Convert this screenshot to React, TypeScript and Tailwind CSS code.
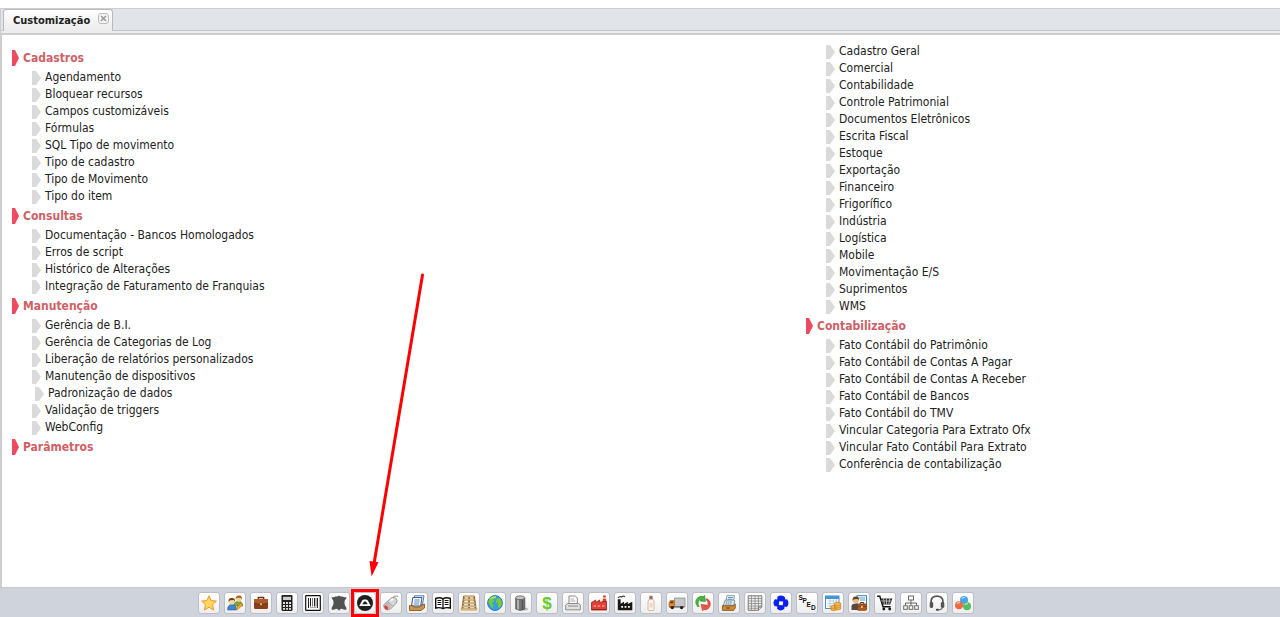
import type { ReactNode } from "react";

type Item = { label: string; nested?: boolean };
type Section = { title?: string; items: Item[] };

const list = (...labels: string[]): Item[] => labels.map((label) => ({ label }));

const leftSections: Section[] = [
  {
    title: "Cadastros",
    items: list(
      "Agendamento",
      "Bloquear recursos",
      "Campos customizáveis",
      "Fórmulas",
      "SQL Tipo de movimento",
      "Tipo de cadastro",
      "Tipo de Movimento",
      "Tipo do item",
    ),
  },
  {
    title: "Consultas",
    items: list(
      "Documentação - Bancos Homologados",
      "Erros de script",
      "Histórico de Alterações",
      "Integração de Faturamento de Franquias",
    ),
  },
  {
    title: "Manutenção",
    items: [
      ...list(
        "Gerência de B.I.",
        "Gerência de Categorias de Log",
        "Liberação de relatórios personalizados",
        "Manutenção de dispositivos",
      ),
      { label: "Padronização de dados", nested: true },
      ...list("Validação de triggers", "WebConfig"),
    ],
  },
  { title: "Parâmetros", items: [] },
];

const rightSections: Section[] = [
  {
    items: list(
      "Cadastro Geral",
      "Comercial",
      "Contabilidade",
      "Controle Patrimonial",
      "Documentos Eletrônicos",
      "Escrita Fiscal",
      "Estoque",
      "Exportação",
      "Financeiro",
      "Frigorífico",
      "Indústria",
      "Logística",
      "Mobile",
      "Movimentação E/S",
      "Suprimentos",
      "WMS",
    ),
  },
  {
    title: "Contabilização",
    items: list(
      "Fato Contábil do Patrimônio",
      "Fato Contábil de Contas A Pagar",
      "Fato Contábil de Contas A Receber",
      "Fato Contábil de Bancos",
      "Fato Contábil do TMV",
      "Vincular Categoria Para Extrato Ofx",
      "Vincular Fato Contábil Para Extrato",
      "Conferência de contabilização",
    ),
  },
];

function MenuSection({ section }: { section: Section }) {
  return (
    <section>
      {section.title && (
        <h2 className="my-0.5 flex h-[18px] items-center gap-1 text-xs leading-[18px] font-bold text-[#cf5f66]">
          <svg viewBox="0 0 7 16" className="h-4 w-[7px] shrink-0" aria-hidden="true">
            <path d="M0 0H3L7 8L3 16H0Z" fill="#ef4a60" />
          </svg>
          {section.title}
        </h2>
      )}
      <ul className="pl-5">
        {section.items.map((item) => (
          <li key={item.label} className={item.nested ? "flex pl-[3px]" : "flex"}>
            <a href="#" className="flex h-[17px] items-center gap-1 text-xs leading-[17px] text-[#222]">
              <svg viewBox="0 0 9 14" className="h-3.5 w-[9px] shrink-0" aria-hidden="true">
                <path d="M0 0H4L9 7L4 14H0Z" fill="#dadada" />
              </svg>
              {item.label}
            </a>
          </li>
        ))}
      </ul>
    </section>
  );
}

const modules: { name: string; art: ReactNode; marked?: boolean }[] = [
  {
    name: "Favoritos",
    art: (
      <path d="M8 .8L10.1 5.6L15.4 6.1L11.5 9.7L12.6 15L8 12.3L3.4 15L4.5 9.7L.6 6.1L5.9 5.6Z" fill="#ffd75e" stroke="#e59a2c" strokeLinejoin="round" />
    ),
  },
  {
    name: "Usuários",
    art: (
      <>
        <path d="M7 9Q8 6 11.5 6.5Q15 6 15.5 10V11H8Z" fill="#7aa83a" stroke="#557a22" strokeWidth=".6" />
        <circle cx="11.8" cy="3.8" r="2.9" fill="#f6cf9a" />
        <path d="M8.6 4Q8.5 .4 12 .5Q15.2.6 15 4.6L13.8 3L10 2.8Z" fill="#a8651c" />
        <path d="M.6 15Q.5 9.5 5 9.5Q9.3 9.5 9.3 15Z" fill="#3c84cf" stroke="#235b9b" strokeWidth=".6" />
        <circle cx="4.8" cy="6.5" r="3" fill="#f8d5a8" />
        <path d="M1.6 7Q1 2.8 5 3Q8.5 3 8 7L7 5L3 5.2Z" fill="#6b4113" />
        <path d="M9 15L10 12L14 8L15.5 9.7L11.6 13.8Z" fill="#f6a52c" stroke="#b66812" strokeWidth=".6" />
      </>
    ),
  },
  {
    name: "Maleta",
    art: (
      <>
        <path d="M5.3 4V2.5H10.7V4" fill="none" stroke="#6b3012" strokeWidth="1.3" />
        <rect x="1" y="4" width="14" height="10" rx="1.2" fill="#8a4118" />
        <path d="M1 5Q1 4 2 4H14Q15 4 15 5V8Q8 10.5 1 8Z" fill="#ac5a28" />
        <path d="M1 8.3Q8 11 15 8.3" fill="none" stroke="#6b3012" strokeWidth=".8" />
        <rect x="7.2" y="8.4" width="1.6" height="1.8" fill="#f1cf94" />
      </>
    ),
  },
  {
    name: "Calculadora",
    art: (
      <>
        <rect x="2.5" width="11" height="16" rx="1.3" fill="#222" />
        <rect x="4" y="1.8" width="8" height="3.2" fill="#ccc" />
        <path d="M4 7H6V9H4ZM7 7H9V9H7ZM10 7H12V9H10ZM4 10H6V12H4ZM7 10H9V12H7ZM10 10H12V12H10ZM4 13H6V14.7H4ZM7 13H9V14.7H7ZM10 13H12V14.7H10Z" fill="#ddd" />
      </>
    ),
  },
  {
    name: "Código de barras",
    art: (
      <>
        <rect x=".7" y=".7" width="14.6" height="14.6" rx=".6" fill="#fff" stroke="#111" strokeWidth="1.2" />
        <path d="M3.5 3V13M5.5 3V11.5M9.5 3V11.5M12.5 3V13" stroke="#222" />
        <path d="M7.5 3V11.5M11 3V11.5" stroke="#777" />
        <path d="M5 12.6H11.5" stroke="#888" strokeWidth=".8" />
      </>
    ),
  },
  {
    name: "Couro",
    art: (
      <path d="M.6 2Q3 2.7 5 1.2Q6.3 2 8 .5Q9.7 2 11 1.2Q13 2.7 15.4 2Q15.5 4 13.8 5.3Q13 8 14 10.4Q15.8 12.4 15.2 14.7Q13 15.3 11 13.7Q9 13.6 8 15.7Q7 13.6 5 13.7Q3 15.3.8 14.7Q.2 12.4 2 10.4Q3 8 2.2 5.3Q.5 4 .6 2Z" fill="#505350" />
    ),
  },
  {
    name: "Customização",
    marked: true,
    art: (
      <>
        <circle cx="8" cy="8" r="8" fill="#1f1f1f" />
        <path d="M2.2 11L5.2 5.6Q5.9 4.4 7.2 4.4H8.8Q10.1 4.4 10.8 5.6L13.8 11Z" fill="#fff" />
        <path d="M5.2 9.2L7.1 6.6H8.9L10.8 9.2Z" fill="#1f1f1f" />
      </>
    ),
  },
  {
    name: "Mouse",
    art: (
      <>
        <path d="M.9 9.6L8.6 2.7Q11.8 1.4 13.4 3.7Q15 6 13.2 8.2L7.3 14.2Q4.4 16 2 13.8Q.2 11.7.9 9.6Z" fill="#d7d7d7" stroke="#888" strokeWidth=".8" />
        <path d="M1 10L4.5 7L8.7 12.5L6.6 14.5Q4 15.6 2 13.7Q.5 12.4 1 10Z" fill="#bbb" />
        <path d="M1.2 11Q3 9.5 4.8 12.1Q5.5 13.8 4.4 15Q1.3 14.4 1.2 11Z" fill="#df3d2c" />
        <path d="M5 7L9.8 11.3M8.7 3L12 1L15.3 1.3" fill="none" stroke="#999" />
        <path d="M7.5 5.6L10 4" stroke="#fff" strokeWidth="1.5" />
      </>
    ),
  },
  {
    name: "Documentos",
    art: (
      <>
        <path d="M5.5.8H15L13.4 9.8H4Z" fill="#fff" stroke="#5278ab" />
        <path d="M3.8 2.5H13L11.7 11H2.5Z" fill="#f4f8ff" stroke="#315b97" />
        <path d="M5.5 5H10.8M5.2 7H10.5M4.8 9H10" stroke="#6b8cba" />
        <path d="M.5 10.5H4L5 12H10.8L11.8 10.5L15.5 9V13L12 15.5H.5Z" fill="#c9954a" stroke="#80501c" strokeWidth=".8" />
      </>
    ),
  },
  {
    name: "Livro",
    art: (
      <>
        <path d="M.7 3.5Q5 1.8 8 3.8Q11 1.8 15.3 3.5V13Q11 12 8 13.5Q5 12 .7 13Z" fill="#fff" stroke="#111" strokeWidth="1.4" />
        <path d="M8 4V13.5" stroke="#111" strokeWidth="1.3" />
        <path d="M2.5 5.5H6.3M2.5 7.5H6.3M2.5 9.5H6.3M9.7 5.5H13.5M9.7 7.5H13.5M9.7 9.5H13.5" stroke="#111" />
      </>
    ),
  },
  {
    name: "Palete",
    art: (
      <>
        <path d="M3 1L1.3 15M13 1L14.7 15M8 1V15" stroke="#8a6434" strokeWidth="1.8" />
        <path d="M3 .6H13V2.2H3ZM2.5 3.8H13.5V5.5H2.5ZM2 7.2H14V8.9H2ZM1 10.4H15V12H1ZM0 13.3H16V15.2H0Z" fill="#dfbd84" stroke="#aa8045" strokeWidth=".4" />
      </>
    ),
  },
  {
    name: "Globo",
    art: (
      <>
        <circle cx="8" cy="8" r="7.4" fill="#399de8" stroke="#2276be" />
        <path d="M2.2 3.6Q5 .6 9.5 1.2L8.7 3.4L6.6 4.3L7 6.5L4.7 8.2L6.3 9.9L5.4 13.7Q3.5 11.8 3 9.4L1.4 7.6ZM10.5 3.3L13.2 3.4Q15.3 6 14.9 9.5L12.3 13.4L10.8 11L11.2 8.6L9 7.4L9.2 5Z" fill="#77cc30" />
        <path d="M3.5 3.5Q6 1.7 9 2" stroke="#c9edaf" fill="none" />
      </>
    ),
  },
  {
    name: "Barril",
    art: (
      <>
        <ellipse cx="11.2" cy="14" rx="3.8" ry="1.5" fill="#bbb" />
        <path d="M2.7 3Q7 0 11.8 3V14Q7 16.8 2.7 14Z" fill="#747474" stroke="#444" strokeWidth=".7" />
        <path d="M5 3V14.5" stroke="#bbb" strokeWidth="1.7" />
        <path d="M9.5 4V15" stroke="#555" strokeWidth="1.5" />
        <ellipse cx="7.2" cy="2.7" rx="4.6" ry="1.9" fill="#c6c6c6" stroke="#555" strokeWidth=".7" />
      </>
    ),
  },
  {
    name: "Dinheiro",
    art: (
      <text x="8" y="14" textAnchor="middle" fill="#67c92d" fontFamily="Liberation Sans, sans-serif" fontWeight="700" fontSize="17">
        $
      </text>
    ),
  },
  {
    name: "Impressora",
    art: (
      <>
        <path d="M4 8V1H10.3L12.3 3V8" fill="#fff" stroke="#888" />
        <path d="M5.5 4H9M5.5 6H10.5" stroke="#aaa" />
        <path d="M2.5 8.5H13.5L15.3 10V14.8H.7V10Z" fill="#e1e1e1" stroke="#8a8a8a" />
        <path d="M3 11H13" stroke="#888" />
      </>
    ),
  },
  {
    name: "Indústria",
    art: (
      <>
        <path d="M11.5 7L12.2.5H14.7L15.5 7Z" fill="#d94336" />
        <path d="M12 3H15" stroke="#fff" />
        <path d="M.5 15V7.5L4.7 5V7.5L8.6 5V7.5L12 6.5H15.5V15Z" fill="#e34133" stroke="#9d2019" strokeWidth=".8" />
        <path d="M2.5 11H5M6.7 11H9.2M11 11H13.5" stroke="#ffc9bd" strokeWidth="1.2" />
        <path d="M.5 14.5H15.5" stroke="#981f18" />
      </>
    ),
  },
  {
    name: "Produção",
    art: (
      <>
        <path d="M.8 15.3V4.3H3.6V8.7L7 6.7V9L10.8 6.7V9L15.3 6.7V15.3Z" fill="#171717" />
        <path d="M1 3Q2.5.8 4.5 2Q6 .4 8 1.7" fill="none" stroke="#444" strokeWidth="1.2" />
        <path d="M4.2 11H6V12.8H4.2ZM7.6 11H9.4V12.8H7.6ZM11 11H12.8V12.8H11Z" fill="#fff" />
      </>
    ),
  },
  {
    name: "Frasco",
    art: (
      <>
        <path d="M6.5 4L5 6.2V14.6Q5 15.5 6 15.5H10Q11 15.5 11 14.6V6.2L9.5 4Z" fill="#fbf4ee" stroke="#c7aa98" strokeWidth=".8" />
        <rect x="6.4" y=".8" width="3.2" height="3.4" fill="#9b705b" />
        <rect x="6.5" y="8" width="3" height="4.5" fill="#f1d5c3" />
      </>
    ),
  },
  {
    name: "Transporte",
    art: (
      <>
        <path d="M5.5 3H16V11.5H5.5Z" fill="#c5c7c9" stroke="#8c8f93" strokeWidth=".8" />
        <path d="M0 8L1.3 5.5H5.3V12H0Z" fill="#ed8b22" stroke="#a95611" strokeWidth=".6" />
        <path d="M1.6 6.3H4.2V8.2H.9Z" fill="#553a25" />
        <path d="M.5 12H15.5" stroke="#555" />
        <circle cx="3.3" cy="12.6" r="1.7" fill="#222" />
        <circle cx="12.6" cy="12.6" r="1.7" fill="#222" />
      </>
    ),
  },
  {
    name: "Sincronizar",
    art: (
      <>
        <path d="M2.6 11.5Q-.8 7.5 2 3.6Q4.6.2 8.2 1.6L9.6 .4L10.4 6.6L4.8 6L6.4 4.4Q4.4 4 3.4 6.4Q2.5 8.9 4.2 11.6Z" fill="#48b73e" stroke="#238820" strokeWidth=".6" />
        <path d="M12 3.6Q16.5 6.5 15 11Q13.2 15.3 8.9 14.5L7.6 15.8L6 9.4L12 10.2L10.4 11.7Q12.6 11.6 13.1 9.2Q13.4 6.5 11 4.4Z" fill="#ed5848" stroke="#b92e23" strokeWidth=".6" />
      </>
    ),
  },
  {
    name: "Caixa",
    art: (
      <>
        <path d="M6 .7H13.5L12.6 6H5Z" fill="#fff" stroke="#829ab0" />
        <path d="M7 2.5H12M6.8 4.2H11.5" stroke="#638fbb" />
        <path d="M4.3 5H13L14 6L12.3 11H2Z" fill="#dae7ef" stroke="#647e92" strokeWidth=".8" />
        <path d="M5 7H11.5M4.5 9H11" stroke="#5b86aa" strokeDasharray="1.5 .7" />
        <path d="M1.4 10.7H12.5L14.3 9V13L12.5 15.4H1.4Z" fill="#ca8a36" stroke="#7f4b18" strokeWidth=".8" />
        <path d="M5.5 13H8.5" stroke="#56310f" />
      </>
    ),
  },
  {
    name: "Planilha",
    art: (
      <>
        <path d="M1.2.8H14.8V12L11.5 15.3H1.2Z" fill="#eee" stroke="#777" />
        <path d="M1.2 3.5H14.8M1.2 6H14.8M1.2 8.5H14.8M1.2 11H14.8M1.2 13.3H12M4.5.8V15.3M8 .8V15.3M11.4.8V12" stroke="#888" strokeWidth=".8" />
        <path d="M11.5 15.3V12H14.8" fill="#ddd" stroke="#777" />
      </>
    ),
  },
  {
    name: "Conexões",
    art: (
      <path
        d="M4.5 1.5Q9 -.8 12.2 2.4L11.8 4.2L14.2 4.6Q17 8.6 13.8 12L11.6 11.4L11.2 14Q7.4 17 4 13.8L4.4 11.6L1.8 11.2Q-1 7.4 2 4.2L4.2 4.6ZM6.2 6.2L5.8 10L9.8 10.2L10.2 6.4Z"
        fill="#0a1ff0"
        fillRule="evenodd"
      />
    ),
  },
  {
    name: "Escrituração digital",
    art: (
      <g fill="#111" fontFamily="Liberation Sans, sans-serif" fontWeight="700" fontSize="6.5">
        <text x="-.5" y="5">S</text>
        <text x="3.6" y="8.2">P</text>
        <text x="7.6" y="12">E</text>
        <text x="12" y="15.2">D</text>
      </g>
    ),
  },
  {
    name: "Tabela de custos",
    art: (
      <>
        <rect x=".5" y="1" width="13.5" height="12.5" fill="#fff" stroke="#4c8fc9" />
        <path d="M.5 1H14V4H.5Z" fill="#4395d7" />
        <path d="M2.5 6H12.5M2.5 8.5H12.5M2.5 11H12.5M5 4V13M8.3 4V13M11.5 4V13" stroke="#a8c7df" strokeWidth=".8" />
        <path d="M9.5 8Q12.5 6.5 15.7 8V14Q12.5 16 9.5 14ZM6 11Q8.5 9.9 11 11V15Q8.5 16.3 6 15Z" fill="#f4b74c" stroke="#c97b1a" strokeWidth=".7" />
        <path d="M9.5 10Q12.5 11.5 15.7 10M9.5 12.2Q12.5 13.5 15.7 12.2M6 13Q8.5 14.2 11 13" fill="none" stroke="#d5902b" strokeWidth=".8" />
      </>
    ),
  },
  {
    name: "Representantes",
    art: (
      <>
        <rect x="6" y=".7" width="9.5" height="8.7" fill="#fff" stroke="#2d85bd" />
        <path d="M8 3H14M9 5H14" stroke="#489dcb" />
        <path d="M.5 15V11Q.8 8.5 4.8 8.5Q8 8.5 8.5 11V15Z" fill="#534b44" />
        <circle cx="4.8" cy="5.3" r="3" fill="#efbd83" />
        <path d="M1.5 5.8Q1.2 1.4 5 1.5Q8.6 1.5 8 5.7L7 4L3 4.2Z" fill="#68401e" />
        <path d="M9.3 9V7.5H12.7V9" fill="none" stroke="#71350d" />
        <rect x="6.3" y="9" width="9.3" height="6.3" rx=".8" fill="#ad5b21" stroke="#71350d" strokeWidth=".7" />
        <path d="M6.3 11.5H15.5" stroke="#783b13" />
        <rect x="10" y="11" width="1.8" height="1.8" fill="#f3cf8c" />
      </>
    ),
  },
  {
    name: "Compras",
    art: (
      <>
        <path d="M.2 1.2H2.8L6 11.7H13.6" fill="none" stroke="#151515" strokeWidth="1.5" />
        <path d="M3.8 3.5H15.5L13.2 9.5H5.6Z" fill="#333" />
        <path d="M6.5 3.6L7.5 9.4M9.5 3.6V9.4M12.7 3.6L11.7 9.4M4 6H14.6" stroke="#ddd" strokeWidth=".7" />
        <circle cx="6.8" cy="14" r="1.4" fill="#111" />
        <circle cx="12.7" cy="14" r="1.4" fill="#111" />
      </>
    ),
  },
  {
    name: "Organograma",
    art: (
      <g fill="#fff" stroke="#686868">
        <path d="M8 5V10M2.5 10.5V8H13.5V10.5" fill="none" />
        <rect x="5.5" y="1" width="5" height="4" />
        <rect x=".7" y="10.8" width="3.6" height="3.5" />
        <rect x="6.2" y="10.8" width="3.6" height="3.5" />
        <rect x="11.7" y="10.8" width="3.6" height="3.5" />
      </g>
    ),
  },
  {
    name: "Suporte",
    art: (
      <>
        <path d="M2 10V7Q2 1.2 8 1.2Q14 1.2 14 7V10" fill="none" stroke="#555" strokeWidth="1.7" />
        <rect x=".7" y="7" width="3.5" height="6" rx="1.4" fill="#555" />
        <rect x="11.8" y="7" width="3.5" height="6" rx="1.4" fill="#555" />
        <path d="M13.4 12.5Q13 15 9 15" fill="none" stroke="#666" strokeWidth="1.2" />
        <rect x="6.8" y="13.8" width="3" height="2" rx="1" fill="#444" />
      </>
    ),
  },
  {
    name: "Módulos",
    art: (
      <>
        <circle cx="9" cy="5" r="4" fill="#45a6ed" />
        <circle cx="4" cy="10.2" r="4" fill="#ef6942" />
        <circle cx="12" cy="11.2" r="4" fill="#54bd60" />
        <path d="M6.8 3.6Q8.3 1.8 10.3 2.5M1.8 8.8Q3 7.3 5 7.8M9.8 9.9Q11 8.2 13 8.9" fill="none" stroke="#fff" strokeOpacity=".6" strokeWidth="1.2" />
      </>
    ),
  },
];

function Marker() {
  return (
    <span className="pointer-events-none" aria-hidden="true">
      <span className="absolute -inset-[3px] border-[3px] border-[#fe0000]" />
      <svg viewBox="0 0 60 306" className="absolute bottom-9 left-3.5 h-[306px] w-[60px] max-w-none">
        <path d="M54.5 3L5.8 293" stroke="#fe0000" strokeWidth="3" strokeLinecap="round" />
        <path d="M1.5 289L10.5 290.3L3.6 304.5Z" fill="#fe0000" />
      </svg>
    </span>
  );
}

export default function App() {
  return (
    <div className="flex min-h-screen flex-col bg-white pt-2 font-['DejaVu_Sans_Condensed','DejaVu_Sans',sans-serif]">
      <header className="border-t border-l border-[#cdcdcd] bg-[#e1e4e9]">
        <div className="flex h-[22px] items-end border-b border-[#c5c7ca] pl-0.5" role="tablist">
          <div className="-mb-px flex h-[22px] items-center gap-2 rounded-t-[3px] border border-b-0 border-[#b9b9b9] bg-linear-to-b from-white to-[#ebebeb] pr-[3px] pl-[9px]">
            <button type="button" role="tab" aria-selected="true" className="text-[11px] leading-4 font-bold text-[#222]">
              Customização
            </button>
            <button type="button" aria-label="Fechar" className="mb-1 flex size-[11px] items-center justify-center rounded-[3px] border border-[#bbb] bg-[#f5f5f5]">
              <svg viewBox="0 0 7 7" className="size-[7px]">
                <path d="M1 1L6 6M6 1L1 6" stroke="#999" strokeWidth="1.6" />
              </svg>
            </button>
          </div>
        </div>
        <div className="h-0.5 bg-[#ebebeb]" />
      </header>
      <main className="grid flex-1 grid-cols-[5fr_3fr] gap-1 border-t-2 border-l-2 border-[#cdcdcd] pl-2.5">
        <div className="pt-3">
          {leftSections.map((section, i) => (
            <MenuSection key={i} section={section} />
          ))}
        </div>
        <div className="pt-2">
          {rightSections.map((section, i) => (
            <MenuSection key={i} section={section} />
          ))}
        </div>
      </main>
      <nav aria-label="Módulos" className="flex h-[30px] items-center justify-center border-t border-[#cacaca] bg-[#cfd3db] pt-px pr-[108px]">
        <ul className="flex gap-1">
          {modules.map((m) => (
            <li key={m.name} className="relative">
              <button type="button" title={m.name} aria-label={m.name} className="flex size-[22px] items-center justify-center rounded-[3px] border border-[#bcbec3] bg-linear-to-b from-white to-[#eeeeee]">
                <svg viewBox="0 0 16 16" className="size-4 overflow-visible">{m.art}</svg>
              </button>
              {m.marked && <Marker />}
            </li>
          ))}
        </ul>
      </nav>
    </div>
  );
}
